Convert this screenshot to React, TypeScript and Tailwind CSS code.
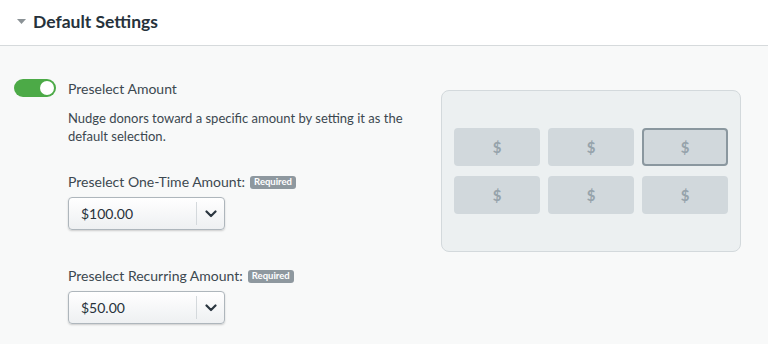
import React from "react";

function Chevron() {
  return (
    <svg width="12" height="8" viewBox="0 0 12 8" fill="none">
      <path d="M1.5 1.5L6 6L10.5 1.5" stroke="#2b3640" strokeWidth="2.2" strokeLinecap="round" strokeLinejoin="round" />
    </svg>
  );
}

function Select({ value }: { value: string }) {
  return (
    <div className="flex h-[33px] w-[157px] items-stretch rounded-[4px] border border-[#aeb6bc] bg-gradient-to-b from-white to-[#eef0f2] shadow-[0_1px_2px_rgba(0,0,0,0.18)]">
      <div className="flex flex-1 items-center pl-[12px] text-[14px] text-[#27323a]">{value}</div>
      <div className="my-[4px] w-px bg-[#d4d9dc]" />
      <div className="flex w-[27px] items-center justify-center">
        <Chevron />
      </div>
    </div>
  );
}

function Badge() {
  return (
    <span className="ml-[5px] inline-flex h-[13px] items-center rounded-[3px] bg-[#8e989f] px-[4px] text-[9.5px] font-bold leading-none text-white">
      Required
    </span>
  );
}

function Tile({ selected }: { selected?: boolean }) {
  return (
    <div
      className={
        selected
          ? "flex h-[38px] items-center justify-center rounded-[4px] border-2 border-[#8a979f] bg-[#d1d8dc] text-[15px] font-bold text-[#96a3ab]"
          : "flex h-[38px] items-center justify-center rounded-[4px] bg-[#d1d8dc] text-[15px] font-bold text-[#96a3ab]"
      }
    >
      $
    </div>
  );
}

export default function App() {
  return (
    <div className="h-[344px] w-[768px] overflow-hidden bg-[#f8f9f9]" style={{ fontFamily: "Lato, 'Liberation Sans', sans-serif" }}>
      <div className="flex h-[46px] items-center border-b border-[#d6dadc] bg-white pl-[17px]">
        <svg width="9" height="5" viewBox="0 0 9 5" className="mt-[-2px]">
          <path d="M0 0H9L4.5 5Z" fill="#8b9296" />
        </svg>
        <span className="ml-[7px] text-[17.5px] font-bold text-[#26323b]">Default Settings</span>
      </div>
      <div className="flex pt-[32px]">
        <div className="flex w-[441px] pl-[14px]">
          <div className="mt-[1px] flex h-[18px] w-[42px] shrink-0 items-center justify-end rounded-full bg-[#4caa47] pr-[2px]">
            <div className="h-[14px] w-[14px] rounded-full bg-white" />
          </div>
          <div className="ml-[12px] flex flex-col text-[#3c4850]">
            <div className="mt-[1px] text-[14px] leading-[20px]">Preselect Amount</div>
            <div className="mt-[10px] w-[340px] text-[13px] leading-[18px]">
              Nudge donors toward a specific amount by setting it as the default selection.
            </div>
            <div className="mt-[27px] flex items-center text-[14px] leading-[20px]">
              Preselect One-Time Amount:
              <Badge />
            </div>
            <div className="mt-[5px]">
              <Select value="$100.00" />
            </div>
            <div className="mt-[36px] flex items-center text-[14px] leading-[20px]">
              Preselect Recurring Amount:
              <Badge />
            </div>
            <div className="mt-[5px]">
              <Select value="$50.00" />
            </div>
          </div>
        </div>
        <div className="mt-[12px] flex h-[162px] w-[300px] flex-col justify-center rounded-[8px] border border-[#d3d9dc] bg-[#ecf0f1] px-[12px]">
          <div className="grid grid-cols-3 gap-x-[8px] gap-y-[10px]">
            <Tile />
            <Tile />
            <Tile selected />
            <Tile />
            <Tile />
            <Tile />
          </div>
        </div>
      </div>
    </div>
  );
}
